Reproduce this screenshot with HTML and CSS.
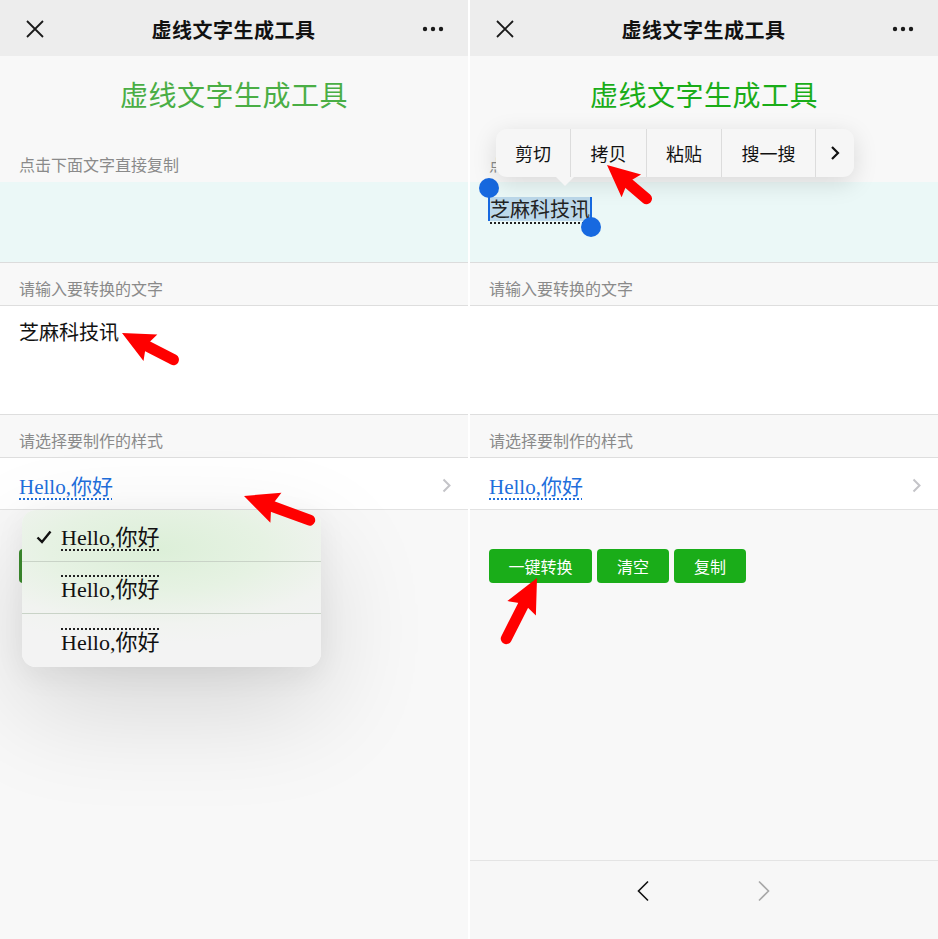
FILE: index.html
```html
<!doctype html>
<html>
<head>
    <meta charset='utf-8'>
    <title>虚线文字生成工具</title>
    <link rel="stylesheet" href="styles.css">
</head>
<body>
<div class='screens'>
    <!-- 左：选择样式 -->
    <div class='phone phone-left'>
        <div class='navbar'>
            <svg class='nav-close' width='20' height='20' viewBox='0 0 20 20'><path d='M2 2L18 18M18 2L2 18' stroke='#1a1a1a' stroke-width='1.8' fill='none'/></svg>
            <div class='nav-title'>虚线文字生成工具</div>
            <svg class='nav-more' width='22' height='6' viewBox='0 0 22 6'><circle cx='3' cy='3' r='2.2' fill='#1a1a1a'/><circle cx='11' cy='3' r='2.2' fill='#1a1a1a'/><circle cx='19' cy='3' r='2.2' fill='#1a1a1a'/></svg>
        </div>
        <div class='page'>
            <h1 class='brand'>虚线文字生成工具</h1>
            <div class='label'>点击下面文字直接复制</div>
            <div class='output'></div>
            <div class='label'>请输入要转换的文字</div>
            <div class='input'>芝麻科技讯</div>
            <div class='label'>请选择要制作的样式</div>
            <div class='picker'>
                <span class='sample'>Hello,你好</span>
                <svg class='chev' width='9' height='15' viewBox='0 0 9 15'><path d='M1.5 1.5L7.5 7.5L1.5 13.5' stroke='#c4c4c8' stroke-width='2' fill='none'/></svg>
            </div>
            <div class='actions'>
                <button class='btn btn-wide'>一键转换</button>
                <button class='btn'>清空</button>
                <button class='btn'>复制</button>
            </div>
        </div>
        <div class='dropdown'>
            <div class='opt'>
                <svg class='check' width='16' height='14' viewBox='0 0 16 14'><path d='M1.5 7.5L6 12L14.5 1.5' stroke='#111' stroke-width='2.4' fill='none'/></svg>
                <span class='opt-text dots-below'>Hello,你好</span>
            </div>
            <div class='opt'><span class='opt-text dots-above'>Hello,你好</span></div>
            <div class='opt'><span class='opt-text dots-above fine'>Hello,你好</span></div>
        </div>
    </div>

    <!-- 右：转换结果 -->
    <div class='phone phone-right'>
        <div class='navbar'>
            <svg class='nav-close' width='20' height='20' viewBox='0 0 20 20'><path d='M2 2L18 18M18 2L2 18' stroke='#1a1a1a' stroke-width='1.8' fill='none'/></svg>
            <div class='nav-title'>虚线文字生成工具</div>
            <svg class='nav-more' width='22' height='6' viewBox='0 0 22 6'><circle cx='3' cy='3' r='2.2' fill='#1a1a1a'/><circle cx='11' cy='3' r='2.2' fill='#1a1a1a'/><circle cx='19' cy='3' r='2.2' fill='#1a1a1a'/></svg>
        </div>
        <div class='page'>
            <h1 class='brand'>虚线文字生成工具</h1>
            <div class='label'>点击下面文字直接复制</div>
            <div class='output'>
                <span class='selected'>芝麻科技讯<i class='handle handle-start'></i><i class='handle handle-end'></i></span>
            </div>
            <div class='label'>请输入要转换的文字</div>
            <div class='input'></div>
            <div class='label'>请选择要制作的样式</div>
            <div class='picker'>
                <span class='sample'>Hello,你好</span>
                <svg class='chev' width='9' height='15' viewBox='0 0 9 15'><path d='M1.5 1.5L7.5 7.5L1.5 13.5' stroke='#c4c4c8' stroke-width='2' fill='none'/></svg>
            </div>
            <div class='actions'>
                <button class='btn btn-wide'>一键转换</button>
                <button class='btn'>清空</button>
                <button class='btn'>复制</button>
            </div>
        </div>
        <div class='toolbar'>
            <svg width='14' height='22' viewBox='0 0 14 22'><path d='M12 1.5L2.5 11L12 20.5' stroke='#111' stroke-width='1.6' fill='none'/></svg>
            <svg width='14' height='22' viewBox='0 0 14 22'><path d='M2 1.5L11.5 11L2 20.5' stroke='#a8a8a8' stroke-width='1.6' fill='none'/></svg>
        </div>
        <div class='menu'>
            <div class='menu-item m1'>剪切</div>
            <div class='menu-item m2'>拷贝</div>
            <div class='menu-item m3'>粘贴</div>
            <div class='menu-item m4'>搜一搜</div>
            <div class='menu-item m5'><svg width='10' height='16' viewBox='0 0 10 16'><path d='M2 2L8 8L2 14' stroke='#111' stroke-width='2.2' fill='none'/></svg></div>
        </div>
    </div>
</div>

<!-- 红色标注箭头 -->
<svg class='marks' width='938' height='939' viewBox='0 0 938 939'>
    <g transform='translate(122 333) rotate(27.4)'>
        <path d='M0 0L32 -15L27 0L32 15Z' fill='#ff0000'/>
        <line x1='24' y1='0' x2='58' y2='0' stroke='#ff0000' stroke-width='11' stroke-linecap='round'/>
    </g>
    <g transform='translate(244 496) rotate(20.2)'>
        <path d='M0 0L34 -16L29 0L34 16Z' fill='#ff0000'/>
        <line x1='26' y1='0' x2='70' y2='0' stroke='#ff0000' stroke-width='11' stroke-linecap='round'/>
    </g>
    <g transform='translate(607 165) rotate(40.5)'>
        <path d='M0 0L32 -15L27 0L32 15Z' fill='#ff0000'/>
        <line x1='24' y1='0' x2='52' y2='0' stroke='#ff0000' stroke-width='11' stroke-linecap='round'/>
    </g>
    <g transform='translate(537 578) rotate(116.9)'>
        <path d='M0 0L34 -16L29 0L34 16Z' fill='#ff0000'/>
        <line x1='26' y1='0' x2='68' y2='0' stroke='#ff0000' stroke-width='11' stroke-linecap='round'/>
    </g>
</svg>
</body>
</html>
```

FILE: styles.css
```css
*{margin:0;padding:0;box-sizing:border-box;}
body{background:#fff;font-family:"Noto Sans CJK SC","Noto Sans",sans-serif;position:relative;width:938px;height:939px;overflow:hidden;}

.screens{display:flex;gap:2px;height:939px;}
.phone{position:relative;width:468px;height:939px;background:#f8f8f8;overflow:hidden;display:flex;flex-direction:column;}

.navbar{height:56px;background:#ededed;display:flex;align-items:center;justify-content:space-between;padding:2px 24px 0 25px;flex-shrink:0;}
.nav-title{font-size:20px;font-weight:700;color:#111;letter-spacing:0.5px;}

.page{flex:1;}
.brand{margin:18px 0 25px;height:40px;line-height:40px;text-align:center;font-size:28px;font-weight:400;color:#1aad19;letter-spacing:0.5px;}
.phone-left .brand{color:#4aae45;}

.label{height:43px;padding:14px 19px 0;line-height:22px;font-size:16px;color:#8a8a8a;border-bottom:1px solid #dedede;}
.label:first-of-type{border-bottom:none;}
.output{height:81px;background:#ebf8f7;border-bottom:1px solid #dcdcdc;padding:14px 19px 0;line-height:26px;font-size:20px;color:#222;}
.input{height:109px;background:#fff;border-bottom:1px solid #dedede;padding:12px 19px 0;line-height:28px;font-size:20px;color:#111;}
.picker{height:52px;background:#fff;border-bottom:1px solid #e2e2e2;display:flex;align-items:center;justify-content:space-between;padding:3px 17px 0 19px;}
.sample{font-family:"Liberation Serif","Noto Sans CJK SC",serif;font-size:21px;color:#1f6fdc;text-decoration:underline dotted #1f6fdc 2px;text-underline-offset:4px;}

.actions{display:flex;gap:5px;padding:39px 19px 0;}
.btn{height:34px;width:72px;border:none;border-radius:4px;background:#1aad19;color:#fff;font-family:"Noto Sans CJK SC",sans-serif;font-size:16px;}
.btn-wide{width:103px;}
.phone-left .btn{background:#3d8d2f;}

.dropdown{position:absolute;left:22px;top:510px;width:299px;border-radius:14px;overflow:hidden;
    background:radial-gradient(ellipse 80% 60% at 45% 25%,#dcefd8 0%,#e6f2e3 45%,#f1f3f0 80%,#f3f3f3 100%);
    box-shadow:0 40px 110px rgba(0,0,0,0.14),0 8px 30px rgba(0,0,0,0.06);}
.opt{height:52px;display:flex;align-items:center;padding-left:39px;position:relative;border-bottom:1px solid #c9d3c7;}
.opt:last-child{border-bottom:none;height:53px;}
.check{position:absolute;left:14px;top:20px;}
.opt-text{font-family:"Liberation Serif","Noto Sans CJK SC",serif;font-size:22px;color:#111;line-height:30px;padding-top:4px;}
.dots-below{text-decoration:underline dotted #222 2px;text-underline-offset:5px;}
.dots-above{text-decoration:overline dotted #222 2px;}
.fine{text-decoration-thickness:1.5px;}

.selected{position:relative;display:inline-block;background:#bcd8ea;line-height:24px;height:24px;border-left:2px solid #1769e0;border-right:2px solid #1769e0;margin-left:-1px;text-decoration:underline dotted #222 2px;text-underline-offset:5px;}
.handle{position:absolute;width:20px;height:20px;border-radius:50%;background:#1769e0;}
.handle-start{left:-11px;top:-19px;}
.handle-end{right:-11px;top:20px;}

.toolbar{height:79px;border-top:1px solid #e4e4e4;background:#f7f7f7;display:flex;align-items:flex-start;gap:107px;padding:19px 0 0 166px;flex-shrink:0;}

.menu{position:absolute;left:26px;top:129px;width:358px;height:48px;display:flex;background:#f6f6f6;border-radius:11px;box-shadow:0 6px 24px rgba(0,0,0,0.13);}
.menu::after{content:'';position:absolute;left:60px;top:48px;border-left:9px solid transparent;border-right:9px solid transparent;border-top:9px solid #f6f6f6;}
.menu-item{display:flex;align-items:center;justify-content:center;font-size:18px;color:#111;border-right:1px solid #dcdcdc;}
.m1{width:75px;}
.m2{width:76px;}
.m3{width:75px;}
.m4{width:94px;}
.m5{flex:1;border-right:none;}

.marks{position:absolute;left:0;top:0;pointer-events:none;}
```
